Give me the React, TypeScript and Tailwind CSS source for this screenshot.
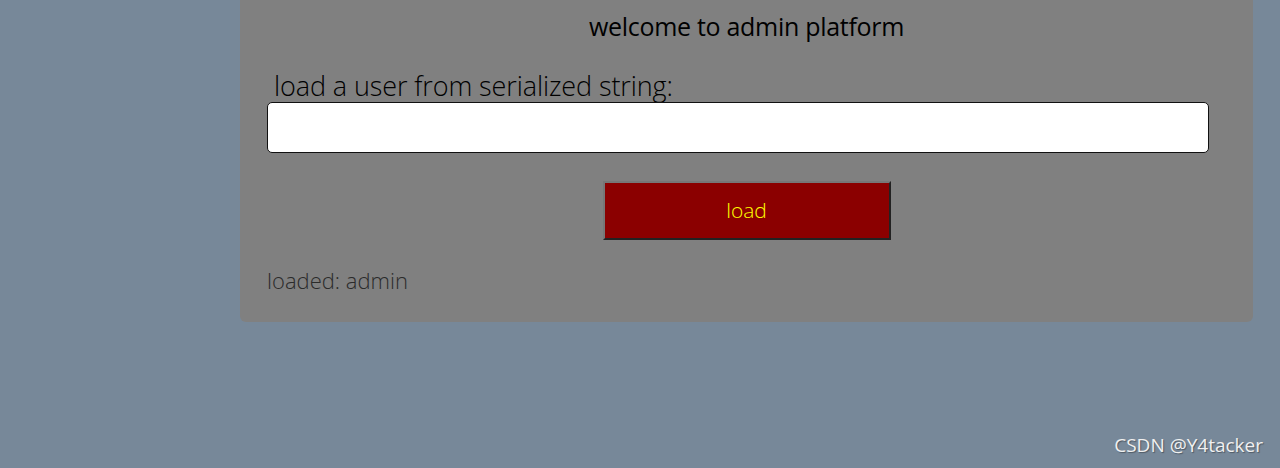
import React from "react";

export default function App() {
  return (
    <div
      className="relative w-[1280px] h-[468px] bg-[#778899] overflow-hidden"
      style={{ fontFamily: '"Open Sans", "Noto Sans", sans-serif' }}
    >
      <div className="ml-[240px] w-[1013px] h-[322px] bg-[#808080] rounded-b-[6px] pl-[27px] pr-[44px] flex flex-col">
        <h1 className="text-[25px] leading-[52px] text-black text-center font-normal mr-[-17px] tracking-[-0.3px]">
          welcome to admin platform
        </h1>
        <label className="mt-[21px] ml-[7px] text-[27px] leading-[26px] font-light text-black tracking-[-0.1px]">
          load a user from serialized string:
        </label>
        <input
          className="mt-[3px] h-[51px] w-[942px] bg-white border-[1.5px] border-[#111] rounded-[5px] outline-none"
          type="text"
        />
        <div className="mt-[28px] flex justify-center mr-[-17px]">
          <button className="w-[288px] h-[59px] bg-[#8b0000] text-[#ffff00] text-[21px] font-light border-2 border-t-[#777] border-l-[#777] border-r-[#222] border-b-[#222]">
            load
          </button>
        </div>
        <p className="mt-[25px] text-[22px] leading-[30px] font-light text-[#2b2b2b]">
          loaded: admin
        </p>
      </div>
      <div
        className="absolute right-[17px] bottom-[9px] text-[19px] text-[#f0f0f0]"
        style={{ textShadow: "1px 1px 1px rgba(0,0,0,0.35)" }}
      >
        CSDN @Y4tacker
      </div>
    </div>
  );
}
